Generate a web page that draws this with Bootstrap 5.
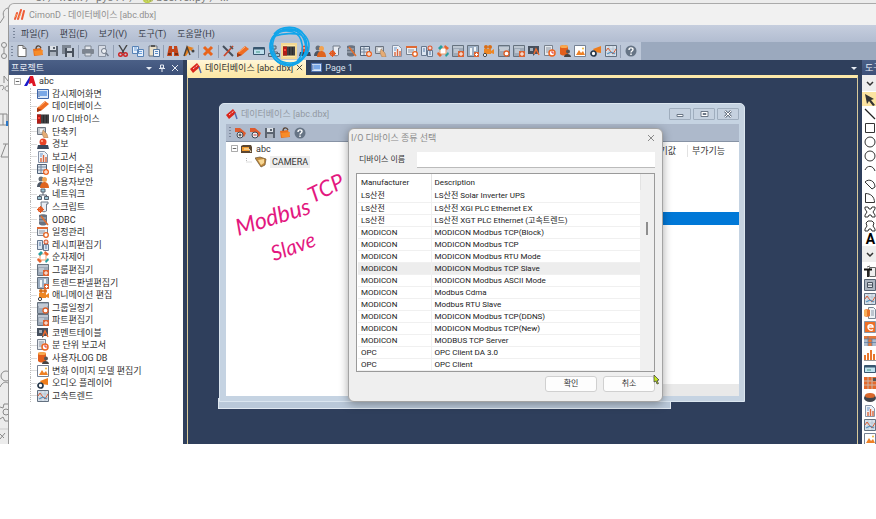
<!DOCTYPE html>
<html lang="ko">
<head>
<meta charset="utf-8">
<meta name="viewport" content="width=device-width, initial-scale=1">
<title>CimonD - 데이터베이스 [abc.dbx]</title>
<link href="https://cdn.jsdelivr.net/npm/bootstrap@5.3.0/dist/css/bootstrap.min.css" rel="stylesheet">
<style>
:root { --navy:#2f3f5c; --bar:#bcc7d8; --cream:#fde9a9; }
body { font-family:Roboto,"Noto Sans CJK KR",sans-serif; font-size:9px; line-height:12px; color:#333; background:#fff; }
button { font:inherit; color:inherit; border:0; background:none; padding:0; }
svg { display:block; }
.ic { width:12px; height:12px; flex:none; }
.desk { background:#ececec; }
.crumbs { height:3px; padding-left:35px; font-size:11px; line-height:10px; color:#777; }
.rail { width:8px; }
.app-win { background:#f1f1f1; border-top:1px solid #aaa; border-left:1px solid #999; border-top-left-radius:6px; min-width:0; }
.app-title { height:21px; padding-left:5px; gap:3px; color:#909090; }
.menus { height:17px; padding-left:4px; gap:11px; background:linear-gradient(#c6cede,#b2bdd1); }
.menus a { color:#3a3f4b; text-decoration:none; }
.menus .grip { margin-right:-5px; }
.grip { width:2px; height:11px; background:repeating-linear-gradient(#7b879b 0 1px,transparent 1px 3px); }
.tool-row { background:#9ba9be; }
.tools { width:632px; height:18px; padding:0 4px 0 2px; background:var(--bar); }
.tools .rule { width:1px; height:13px; background:#929eb2; }
.tools .on { background:#ffe9a8; outline:2px solid #f3d893; }
.work { background:var(--navy); }
.side { width:174px; background:#fff; }
.pane-head { height:15px; padding:0 4px 0 2px; background:linear-gradient(#4b6087,#3c5078); color:#e8edf5; }
.pane-head .ic { width:8px; height:8px; }
.pane-head .ic + .ic { margin-left:1px; }
.tree { height:327px; padding:0 0 0 5px; }
.tree li { gap:3px; white-space:nowrap; }
.tree .leaf { padding-left:23px; position:relative; }
.tree .leaf::before { content:""; position:absolute; left:16px; width:7px; top:0; height:100%; border-left:1px dotted #bbb; background:linear-gradient(#ddd,#ddd) 0 50%/7px 1px no-repeat; }
.side-foot { height:42px; }
.tabs { height:15px; }
.tabs .now { background:linear-gradient(#fff6d8,var(--cream)); color:#333; padding:0 3px; gap:3px; }
.tabs .other { color:#d9e0ec; padding:0 5px; gap:3px; }
.docs { margin:0 4px; min-width:0; }
.mdi { border:1px solid #d8c99a; border-top:3px solid var(--cream); border-bottom:0; position:relative; overflow:hidden; }
.doc-win { position:absolute; left:31px; top:25px; width:526px; height:299px; background:#c5d3e2; border:1px solid #dbe6f0; border-radius:5px 5px 0 0; padding:0 5px 5px 6px; }
.doc-back { position:absolute; left:30px; top:320px; width:453px; height:11px; background:#b9c8d9; border:1px solid #e0e8f1; }
.doc-title { height:20px; color:#9299a3; gap:3px; }
.caps { gap:2px; }
.caps button { width:22px; height:12px; border:1px solid #9fadbd; border-radius:1px; background:#c5d1df; }
.doc-tools { height:17px; background:#adb9cb; padding-left:3px; gap:3px; }
.doc-body { background:#fff; border-top:1px solid #8793a5; }
.db-tree { width:130px; padding:0 0 0 5px; }
.db-tree li { height:13px; gap:3px; }
.db-tree .kid { padding-left:15px; }
.db-tree .kid span { background:#eee; padding:0 2px; }
.vals { width:78px; background:#fff; white-space:nowrap; }
.vals .hd { height:18px; }
.vals .hd span { border-right:1px solid #e2e2e2; width:27px; padding-right:11px; }
.vals .pick { height:13px; margin-top:52px; background:#0078d7; }
.vals .foot { height:12px; background:#e9e9e9; }
.dlg { position:absolute; left:160px; top:50px; width:315px; background:#efefef; border:1px solid #a4a4a4; border-radius:6px; box-shadow:0 2px 10px rgba(0,0,0,.35); padding:0 7px 9px; }
.dlg-title { height:17px; margin:0 0 0 -5px; color:#8a8a8a; }
.dlg-field { height:27px; padding-left:3px; }
.dlg-field label { width:58px; font-size:8px; }
.dlg-field input { height:16px; border:0; border-bottom:1px solid #bbb; background:#fff; font-size:9px; min-width:0; }
.grid-box { border:1px solid #9a9a9a; background:#fff; }
.grid-box table { font-size:8px; line-height:11px; color:#222; margin:0 0 0 1px; table-layout:fixed; }
.grid-box th { font-weight:400; height:16px; padding:0 3px; border-right:1px solid #e3e3e3; }
.grid-box td { height:12px; padding:0 3px; border-bottom:1px solid #f0f0f0; border-right:1px solid #f0f0f0; white-space:nowrap; }
.grid-box .sel td { background:#ededed; }
.c1 { width:73px; }
.scroll { width:13px; background:#f0f0f0; padding:48px 0 0 5px; }
.scroll i { display:block; width:2px; height:13px; background:#8e8e8e; }
.dlg-btns { gap:6px; padding-top:4px; }
.dlg-btns button { width:52px; height:16px; background:#fdfdfd; border:1px solid #d0d0d0; border-radius:3px; font-size:8px; }
.mouse { position:absolute; right:1px; bottom:16px; width:8px; height:10px; }
.ink { position:absolute; color:#e3187f; font-family:Lato,"Noto Sans",sans-serif; font-style:italic; font-weight:400; line-height:24px; white-space:nowrap; }
.ink-a { left:46px; top:126px; font-size:23px; transform:rotate(-17deg); }
.ink-b { left:119px; top:98px; font-size:22px; transform:rotate(-26deg); }
.ink-c { left:82px; top:156px; font-size:21px; transform:rotate(-20deg); }
.loop { position:absolute; left:266px; top:26px; width:46px; height:42px; pointer-events:none; }
.box { width:14px; background:#fff; overflow:hidden; }
.box .pane-head { padding:0 0 0 3px; white-space:nowrap; }
.box button { display:block; width:14px; height:14px; padding:1px 0 0 2px; }
.box .fold { height:16px; margin-bottom:1px; background:#eee; padding-top:2px; }
.box .on { background:#fbe3a0; }
.box .letter { font-size:14px; line-height:14px; font-weight:700; color:#000; padding:0 0 0 3px; }
.picks { height:369px; overflow:hidden; }
</style>
<script src="https://cdn.jsdelivr.net/npm/bootstrap@5.3.0/dist/js/bootstrap.bundle.min.js"></script>
</head>
<body>
<svg width="0" height="0" class="position-absolute" aria-hidden="true">
<defs>
<symbol id="new" viewBox="0 0 12 12"><path d="M2 .5h5l3 3v8H2z" fill="#fff" stroke="#666"/><path d="M7 .5v3h3" fill="none" stroke="#666"/></symbol>
<symbol id="open" viewBox="0 0 12 12"><path d="M1 4l8-1 2 7-9 1z" fill="#e8701c"/><path d="M4 4c0-4 4-4 5-1" fill="none" stroke="#5a4637" stroke-width="1.3"/><path d="M2 6l9-1-1 5H3z" fill="#f78c28"/></symbol>
<symbol id="save" viewBox="0 0 12 12"><path d="M1 1h10v10H1z" fill="#5b6470"/><path d="M3 1h6v4H3z" fill="#dde2e8"/><path d="M3 7h6v4H3z" fill="#aab2bd"/><path d="M6 2h2v2H6z" fill="#5b6470"/></symbol>
<symbol id="saveall" viewBox="0 0 12 12"><path d="M0 0h9v9H0z" fill="#7c8591"/><path d="M3 3h9v9H3z" fill="#48515d"/><path d="M5 3h5v3H5zM5 8h5v4H5z" fill="#c9d0d9"/></symbol>
<symbol id="print" viewBox="0 0 12 12"><path d="M3 1h6v4H3z" fill="#e6e9ee" stroke="#7d8590"/><rect y="4" width="12" height="5" rx="1" fill="#7d8590"/><path d="M3 8h6v3H3z" fill="#dde1e7" stroke="#7d8590"/></symbol>
<symbol id="preview" viewBox="0 0 12 12"><path d="M1.500 .5h7v11h-7z" fill="#d7dce5" stroke="#8b94a3"/><circle cx="7" cy="6" r="2.500" fill="#eef1f5" stroke="#707a89"/><path d="M9 8l2.500 3" stroke="#707a89" stroke-width="1.500"/></symbol>
<symbol id="cut" viewBox="0 0 12 12"><path d="M2 0l5 8M10 0L5 8" stroke="#444" stroke-width="1.400"/><circle cx="3.500" cy="9.500" r="1.800" fill="none" stroke="#c22" stroke-width="1.400"/><circle cx="8.500" cy="9.500" r="1.800" fill="none" stroke="#c22" stroke-width="1.400"/></symbol>
<symbol id="copy" viewBox="0 0 12 12"><path d="M.5 1.500h6v7h-6zM5.500 4.500h6v7h-6z" fill="#e8f1fb" stroke="#5782b5"/><path d="M2 3h3M2 5h3M7 6.500h3M7 8.500h3" stroke="#6da0dc"/></symbol>
<symbol id="paste" viewBox="0 0 12 12"><path d="M1 1h8v10H1z" fill="#e9dfc7" stroke="#6b7280"/><path d="M3 0h4v2H3z" fill="#555"/><path d="M5.500 4.500h6v7h-6z" fill="#eef4fb" stroke="#53749b"/><path d="M7 6.500h3M7 8.500h3" stroke="#5b8cc6"/></symbol>
<symbol id="find" viewBox="0 0 12 12"><path d="M2 1h3v3h2V1h3l2 10H7V7H5v4H0z" fill="#c3451a"/><path d="M1 8h3v2H1zM8 8h3v2H8z" fill="#7b2c12"/></symbol>
<symbol id="replace" viewBox="0 0 12 12"><path d="M4 1l7 2-2 1 1 3-3-2-4 6H1z" fill="#e8821f"/><path d="M1 11L4 2l3 8" fill="none" stroke="#4b4036" stroke-width="1.400"/><circle cx="10" cy="6" r="1.500" fill="#444"/></symbol>
<symbol id="cross" viewBox="0 0 12 12"><path d="M2 2l8 8M10 2l-8 8" stroke="#e8641b" stroke-width="3"/></symbol>
<symbol id="wrench" viewBox="0 0 12 12"><path d="M1 1l10 10" stroke="#454e5b" stroke-width="2"/><path d="M11 1L2 11" stroke="#c9482c" stroke-width="1.800"/><path d="M8 1l3 3" stroke="#555" stroke-width="1.500"/></symbol>
<symbol id="pen" viewBox="0 0 12 12"><path d="M0 8l8-7 4 3-7 6-5 2z" fill="#ef6d22"/><path d="M0 8l5 2-5 2z" fill="#a23a16"/><path d="M2 7l6-5" stroke="#ffb27a"/></symbol>
<symbol id="tag" viewBox="0 0 12 12"><path d="M0 7l7-6 3 4-7 6z" fill="#d9261c"/><path d="M3 7l5-4" stroke="#fff" stroke-dasharray="1 1"/><path d="M9 5l2 6" stroke="#5570b0" stroke-width="1.500"/></symbol>
<symbol id="screen" viewBox="0 0 12 12"><path d="M.5 1.500h11v9H.5z" fill="#dce8f8" stroke="#3f66a8"/><path d="M3 3h7v5H3z" fill="#79a7e6"/><path d="M2 3v6" stroke="#3f66a8"/></symbol>
<symbol id="monitor" viewBox="0 0 12 12"><path d="M.5 2.500h11v7H.5z" fill="#bfe1ee" stroke="#38566f"/><path d="M1 3h10v1.500H1z" fill="#38566f"/><path d="M3 7h4" stroke="#498"/></symbol>
<symbol id="net" viewBox="0 0 12 12"><path d="M6 4v3M2.500 9V7h7v2" fill="none" stroke="#56606e"/><path d="M4 1h4v3H4zM.5 8.500h4v3h-4zM7.500 8.500h4v3h-4z" fill="#9dc5d4" stroke="#56606e"/></symbol>
<symbol id="io" viewBox="0 0 12 12"><path d="M0 1.500h12v9H0z" fill="#2c2c2e"/><path d="M0 1.500h4v9H0z" fill="#b11d16"/><path d="M1 4h2v2H1z" fill="#ff4537"/><path d="M5 2v8M8 2v8M11 2v8" stroke="#66696c" stroke-width=".7"/></symbol>
<symbol id="alarm" viewBox="0 0 12 12"><circle cx="6" cy="4" r="3.500" fill="#e94326"/><path d="M4 2h2v2H4z" fill="#ff9b7d"/><path d="M1 7h10l1 4H0z" fill="#39475c"/></symbol>
<symbol id="users" viewBox="0 0 12 12"><circle cx="4" cy="3" r="2.500" fill="#666e79"/><path d="M0 11c0-6 7-7 8 0z" fill="#4c5664"/><circle cx="7.500" cy="3.500" r="2.500" fill="#f3a24f"/><path d="M3 12c0-8 9-8 9 0z" fill="#df641f"/></symbol>
<symbol id="script" viewBox="0 0 12 12"><path d="M4 1h7v2H9.500v7c-1 1-4 1-5 0z" fill="#e8ecf2" stroke="#707a88"/><circle cx="3.500" cy="8.500" r="2" fill="none" stroke="#e65a1f" stroke-width="1.500"/><path d="M0 8.500h7M3.500 5v7" stroke="#e65a1f"/></symbol>
<symbol id="odbc" viewBox="0 0 12 12"><path d="M2 1c2-1 6-1 8 0v9c-2 2-6 2-8 0z" fill="#697381"/><path d="M2 4h7M2 7h7" stroke="#b1bac6"/><path d="M4 2l7 9" stroke="#e56e2d" stroke-width="1.500"/></symbol>
<symbol id="collect" viewBox="0 0 12 12"><path d="M.5 1.500h9v9h-9z" fill="#dde5ee" stroke="#526277"/><path d="M1 4h8M1 7h8M4 2v8" stroke="#75869c"/><circle cx="9" cy="9" r="3" fill="#ed6423"/><path d="M7 9h4M9 7v4" stroke="#fff"/></symbol>
<symbol id="key" viewBox="0 0 12 12"><path d="M.5 1.500h8v7h-8z" fill="#c4c9ce" stroke="#6c7480"/><path d="M3 3h3v3H3z" fill="#f1f3f5"/><path d="M6 4l1 1 3 3 1 4H7L5 8z" fill="#e5ac75" stroke="#9a744e" stroke-width=".5"/></symbol>
<symbol id="report" viewBox="0 0 12 12"><path d="M1.500 .5h6l3 3v8h-9z" fill="#edf2f8" stroke="#8793a7"/><path d="M4 11V7M6.500 11V4M9 11V6" stroke="#db653a" stroke-width="1.400"/><path d="M3 3h3M3 5h2" stroke="#6a94c8"/></symbol>
<symbol id="sched" viewBox="0 0 12 12"><path d="M.5 1.500h10v8H.5z" fill="#eceff3" stroke="#77818e"/><path d="M0 1h11v2H0z" fill="#df6a34"/><path d="M2 5h6M2 7h5" stroke="#8c96a4"/><circle cx="9" cy="9" r="2.300" fill="#fff" stroke="#e7621e" stroke-width="1.300"/></symbol>
<symbol id="recipe" viewBox="0 0 12 12"><path d="M.5 1.500h5v9h-5zM6.500 5.500h5v6h-5z" fill="#dbe5f1" stroke="#67788f"/><path d="M2 4h2M2 6h2M8 7h2M8 9h2" stroke="#557ba8"/><circle cx="9" cy="3" r="2.500" fill="#d8572f"/><path d="M7.500 3h3M9 1.500v3" stroke="#fff"/></symbol>
<symbol id="seq" viewBox="0 0 12 12"><path d="M3 3h6v6H3z" fill="#fff" stroke="#f09b64"/><path d="M1 3l3-3 2 2-3 3zM8 10l3-3 1 2-3 3z" fill="#27a0a0"/><path d="M8 0l4 3-2 2-3-3zM1 7l4 3-2 2-3-3z" fill="#e8642d"/></symbol>
<symbol id="group" viewBox="0 0 12 12"><path d="M.5 .5h11v11H.5z" fill="#9eaab8" stroke="#66727f"/><path d="M1 2h10M2 5h5M2 7h4" stroke="#dbe2ea"/><path d="M6 6h6v6H6z" fill="#dc6332"/><path d="M7 9h4M9 7v4" stroke="#fff"/></symbol>
<symbol id="trend" viewBox="0 0 12 12"><path d="M.5 .5h11v11H.5z" fill="#9eb0c4" stroke="#66727f"/><path d="M3 10V3h2v7zM7 6V2h2v4z" fill="#eff4f8"/><path d="M7 7h5v5H7z" fill="#dc6332"/><path d="M8 9.500h3M9.500 8v3" stroke="#fff"/></symbol>
<symbol id="anim" viewBox="0 0 12 12"><path d="M2 4h7v5H2zM9 6l3-2v5L9 8z" fill="#ee8724"/><circle cx="4" cy="2" r="2" fill="#d96e18"/><circle cx="8" cy="2" r="2" fill="#d96e18"/><circle cx="3" cy="10" r="1.600" fill="#fff" stroke="#444"/></symbol>
<symbol id="gsched" viewBox="0 0 12 12"><path d="M.5 .5h11v11H.5z" fill="#9eaab8" stroke="#66727f"/><path d="M1 3h10M2 5h8" stroke="#e5eaf0"/><circle cx="8.500" cy="8.500" r="2.500" fill="#fff" stroke="#de602a" stroke-width="1.300"/></symbol>
<symbol id="comment" viewBox="0 0 12 12"><path d="M0 1h11v8H7l-2 2V9H0z" fill="#46505e"/><path d="M6 9l2-5 3 6" fill="none" stroke="#ee6a2d" stroke-width="1.500"/><path d="M2 3h3v3H2z" fill="#a5afbb"/></symbol>
<symbol id="minute" viewBox="0 0 12 12"><path d="M.5 .5h8v10h-8z" fill="#e4e8ed" stroke="#79828f"/><path d="M2 3h5M2 5h4M2 7h3" stroke="#8d96a3"/><circle cx="8" cy="8" r="3" fill="#fff" stroke="#ec641f" stroke-width="1.500"/><path d="M8 6v2h2" stroke="#d33" fill="none"/></symbol>
<symbol id="logdb" viewBox="0 0 12 12"><path d="M1 1c2-1 6-1 8 0v8c-2 2-6 2-8 0z" fill="#e25f1c"/><ellipse cx="5" cy="1.500" rx="4" ry="1.500" fill="#f8a94f"/><circle cx="9" cy="6.500" r="2" fill="#555"/><path d="M5 12c0-4 7-4 7 0z" fill="#444"/></symbol>
<symbol id="docs" viewBox="0 0 12 12"><path d="M4.500 .5h5l2 2v9h-7z" fill="#eef2f6" stroke="#7b8796"/><path d="M7 4h3M7 6h3M7 8h3" stroke="#8d99a8"/><path d="M0 3c1-1 5-1 6 0v6c-1 1-5 1-6 0z" fill="#e8742a"/><path d="M0 3h3v6H0z" fill="#f7b05a"/></symbol>
<symbol id="image" viewBox="0 0 12 12"><path d="M.5 .5h11v11H.5z" fill="#fff" stroke="#758194"/><path d="M2 10l3-5 2 3 2-2 2 4z" fill="#ee8126"/><circle cx="9" cy="3.500" r="1" fill="#ecb53c"/></symbol>
<symbol id="audio" viewBox="0 0 12 12"><path d="M3 4l8-3v7L5 7z" fill="#ee7d1c"/><circle cx="3.500" cy="8.500" r="2.500" fill="#fff" stroke="#26384a" stroke-width="1.700"/></symbol>
<symbol id="fast" viewBox="0 0 12 12"><path d="M.5 .5h11v11H.5z" fill="#d8e1eb" stroke="#637080"/><path d="M1 4h10M1 8h10M4 1v10M8 1v10" stroke="#aab8c8" stroke-width=".6"/><path d="M1 6l2-3 3 4 2 2 3-5" fill="none" stroke="#dd6137"/><path d="M2 9l4-2 4 2" fill="none" stroke="#448bc0"/></symbol>
<symbol id="help" viewBox="0 0 12 12"><circle cx="6" cy="6" r="5.500" fill="#667485"/><path d="M4 5c0-3 4-2.500 4-.5C8 6 6 6 6 7.500M6 8.500V10" fill="none" stroke="#fff" stroke-width="1.400"/></symbol>
<symbol id="down" viewBox="0 0 8 8"><path d="M1 3h6L4 6z" fill="#e6ebf3"/></symbol>
<symbol id="pin" viewBox="0 0 8 8"><path d="M2.500 1h3v3h-3zM1 4.500h6M4 5v3" fill="none" stroke="#e6ebf3"/></symbol>
<symbol id="x" viewBox="0 0 8 8"><path d="M1 1l6 6M7 1L1 7" stroke="currentColor"/></symbol>
<symbol id="minus" viewBox="0 0 8 8"><path d="M.5 .5h7v7h-7z" fill="#fff" stroke="#999"/><path d="M2 4h4" stroke="#555"/></symbol>
<symbol id="logo" viewBox="0 0 12 12"><path d="M1 10l2-6M4 10l3-9M8 10l2-8" stroke="#ee5a36" stroke-width="2" stroke-linecap="round"/><path d="M1 8l2-3M5 9l2-5" stroke="#fba25c"/></symbol>
<symbol id="proj" viewBox="0 0 12 12"><path d="M0 11L6 1l1 3-4 7z" fill="#1a1acb"/><path d="M6 1h3l3 10H9L8 8 5 9z" fill="#de1525"/></symbol>
<symbol id="plusrec" viewBox="0 0 12 12"><path d="M1 1h5l6 5-2 4-5-5H1z" fill="#de5b2e"/><circle cx="6" cy="8" r="3" fill="#eee" stroke="#414a56"/><path d="M4.500 8h3M6 6.500v3" stroke="#333"/></symbol>
<symbol id="minusrec" viewBox="0 0 12 12"><path d="M1 1h5l6 5-2 4-5-5H1z" fill="#de5b2e"/><circle cx="6" cy="8" r="3" fill="#eee" stroke="#414a56"/><path d="M4.500 8h3" stroke="#c33"/></symbol>
<symbol id="db" viewBox="0 0 12 12"><path d="M0 3l2-1h8l1 2v6H0z" fill="#5c4630"/><path d="M1 4h7v4H1z" fill="#f09a2d"/><path d="M3 6h5l2 3" stroke="#fff1d0" fill="none"/></symbol>
<symbol id="cam" viewBox="0 0 12 12"><path d="M0 2l5-1 6 2-1 6-4 2z" fill="#c08a3d" stroke="#6a5130" stroke-width=".7"/><path d="M3 4l6-1v4L6 9z" fill="#f6d795"/></symbol>
<symbol id="chev" viewBox="0 0 12 12"><path d="M3 4l3 3 3-3" fill="none" stroke="#333" stroke-width="1.500"/></symbol>
<symbol id="arrow" viewBox="0 0 12 12"><path d="M1 0l9 5-3 1 4 5-2 1-4-5-2 3z" fill="#333"/></symbol>
<symbol id="line" viewBox="0 0 12 12"><path d="M1 1l10 10" stroke="#222" stroke-width="1.300"/></symbol>
<symbol id="rect" viewBox="0 0 12 12"><path d="M1.500 1.500h9v9h-9z" fill="#fff" stroke="#333"/></symbol>
<symbol id="circ" viewBox="0 0 12 12"><circle cx="6" cy="6" r="5" fill="#fff" stroke="#333"/></symbol>
<symbol id="arc" viewBox="0 0 12 12"><path d="M1 6c2-5 8-5 10 1" fill="none" stroke="#333"/></symbol>
<symbol id="chord" viewBox="0 0 12 12"><path d="M1 4c4-4 10-1 10 5l-3 2z" fill="none" stroke="#333"/></symbol>
<symbol id="pie" viewBox="0 0 12 12"><path d="M1.500 1.500c5 0 9 3 9 9h-9z" fill="none" stroke="#333"/></symbol>
<symbol id="poly" viewBox="0 0 12 12"><path d="M1 1h3l1 2h2l1-2h3v2L9 6l2 3v2H8L7 9H5l-1 2H1V9l2-3-2-3z" fill="none" stroke="#333"/></symbol>
<symbol id="poly2" viewBox="0 0 12 12"><path d="M4 1h4l2 2-1 3 2 3v2H8L7 9H5l-1 2H1V9l2-3-1-3z" fill="none" stroke="#333"/></symbol>
<symbol id="stamp" viewBox="0 0 12 12"><path d="M5.500 2.500h6v9h-6z" fill="#eee" stroke="#666"/><path d="M0 4.500h8M4 4v8" stroke="#111" stroke-width="1.800"/><path d="M3 2l3-1" stroke="#666"/></symbol>
<symbol id="btn3" viewBox="0 0 12 12"><path d="M.5 .5h11v11H.5z" fill="#adb6c1" stroke="#596575"/><path d="M3.500 3.500h5v5h-5zM3 6h6" fill="#e4e8ed" stroke="#49525f"/></symbol>
<symbol id="ebox" viewBox="0 0 12 12"><path d="M.5 .5h11v11H.5z" fill="#ee6f25" stroke="#8a96a6"/><path d="M9 8.500c-2 1.500-5 .5-5-2.500s5-3 5 0H4" fill="none" stroke="#fff" stroke-width="1.500"/></symbol>
<symbol id="sheet" viewBox="0 0 12 12"><path d="M0 1h12v10H0z" fill="#aebccd"/><path d="M0 1h12v3H0zM4 4h4v7H4z" fill="#e3793b"/><path d="M0 4h12M4 1v10M8 4v7M0 7.500h12" stroke="#5a789e" stroke-width=".7"/></symbol>
<symbol id="cells" viewBox="0 0 12 12"><path d="M0 0h12v12H0z" fill="#e3692b"/><path d="M0 4h12M4 0v12M8 0v12M0 8h12" stroke="#c9b5a8"/><path d="M9 1h3v3H9z" fill="#555"/></symbol>
<symbol id="bars" viewBox="0 0 12 12"><path d="M1 11V6M4 11V4M7 11V1M10 11V5" stroke="#e8762c" stroke-width="2"/><path d="M0 11.500h12" stroke="#999"/></symbol>
<symbol id="disk" viewBox="0 0 12 12"><ellipse cx="6" cy="7" rx="6" ry="4" fill="#40464f"/><ellipse cx="6" cy="4.500" rx="5" ry="2.500" fill="#d9672b"/></symbol>
</defs>
</svg>

<div class="desk position-relative overflow-hidden">
  <div class="crumbs d-flex align-items-end overflow-hidden" aria-label="경로"><span>C: 〉work 〉py311 〉🐍 bserver.py 〉...</span></div>
  <div class="d-flex">
    <div class="rail" aria-hidden="true">
      <svg width="8" height="440" viewBox="0 3 8 440" fill="none" stroke="#8a8a8a">
        <path d="M0 23l4-6c-2-4 0-8 4-9"/><circle cx="4" cy="45" r="2.500"/><circle cx="4" cy="56" r="2.500"/><path d="M4 48v5"/>
        <path d="M4 83v-7l4 5M0 86c4-2 5 2 2 4M8 86c-4 0-4 5 0 5"/><path d="M0 114h7v11H0M3 114v11"/><path d="M7 121v5" stroke="#2c78c8" stroke-width="2"/>
        <path d="M3 144h5M6 144l-5 13h7"/><circle cx="6" cy="376" r="5"/><path d="M0 387c3-6 6-5 8-4"/><path d="M0 407l3 1 1-4h4M0 419l3-2 2 4h3"/><circle cx="6" cy="412" r="3"/><path d="M0 429h8" stroke="#ccc"/><path d="M0 439l5-6M0 434l4 4"/>
      </svg>
    </div>
    <main class="app-win flex-grow-1">
      <header class="app-title d-flex align-items-center"><svg class="ic"><use href="#logo"/></svg><span>CimonD - 데이터베이스 [abc.dbx]</span></header>
      <nav class="menus d-flex align-items-center"><span class="grip"></span><a href="#">파일(F)</a><a href="#">편집(E)</a><a href="#">보기(V)</a><a href="#">도구(T)</a><a href="#">도움말(H)</a></nav>
      <div class="tool-row">
        <div class="tools d-flex align-items-center justify-content-between" role="toolbar" aria-label="도구 모음">
          <span class="grip"></span>
          <button aria-label="새로 만들기"><svg class="ic"><use href="#new"/></svg></button>
          <button aria-label="열기"><svg class="ic"><use href="#open"/></svg></button>
          <button aria-label="저장"><svg class="ic"><use href="#save"/></svg></button>
          <button aria-label="모두 저장"><svg class="ic"><use href="#saveall"/></svg></button>
          <span class="rule"></span>
          <button aria-label="인쇄"><svg class="ic"><use href="#print"/></svg></button>
          <button aria-label="미리 보기"><svg class="ic"><use href="#preview"/></svg></button>
          <span class="rule"></span>
          <button aria-label="잘라내기"><svg class="ic"><use href="#cut"/></svg></button>
          <button aria-label="복사"><svg class="ic"><use href="#copy"/></svg></button>
          <button aria-label="붙여넣기"><svg class="ic"><use href="#paste"/></svg></button>
          <span class="rule"></span>
          <button aria-label="찾기"><svg class="ic"><use href="#find"/></svg></button>
          <button aria-label="바꾸기"><svg class="ic"><use href="#replace"/></svg></button>
          <span class="rule"></span>
          <button aria-label="삭제"><svg class="ic"><use href="#cross"/></svg></button>
          <span class="rule"></span>
          <button aria-label="설정"><svg class="ic"><use href="#wrench"/></svg></button>
          <button aria-label="데이터베이스"><svg class="ic"><use href="#pen"/></svg></button>
          <button aria-label="화면"><svg class="ic"><use href="#monitor"/></svg></button>
          <button aria-label="네트워크"><svg class="ic"><use href="#net"/></svg></button>
          <button class="on" aria-label="I/O 디바이스"><svg class="ic"><use href="#io"/></svg></button>
          <button aria-label="경보"><svg class="ic"><use href="#alarm"/></svg></button>
          <button aria-label="사용자보안"><svg class="ic"><use href="#users"/></svg></button>
          <button aria-label="스크립트"><svg class="ic"><use href="#script"/></svg></button>
          <button aria-label="ODBC"><svg class="ic"><use href="#odbc"/></svg></button>
          <button aria-label="데이터수집"><svg class="ic"><use href="#collect"/></svg></button>
          <button aria-label="단축키"><svg class="ic"><use href="#key"/></svg></button>
          <button aria-label="보고서"><svg class="ic"><use href="#report"/></svg></button>
          <button aria-label="일정관리"><svg class="ic"><use href="#sched"/></svg></button>
          <button aria-label="레시피편집기"><svg class="ic"><use href="#recipe"/></svg></button>
          <button aria-label="순차제어"><svg class="ic"><use href="#seq"/></svg></button>
          <button aria-label="그룹편집기"><svg class="ic"><use href="#group"/></svg></button>
          <button aria-label="트렌드판넬편집기"><svg class="ic"><use href="#trend"/></svg></button>
          <button aria-label="애니메이션 편집"><svg class="ic"><use href="#anim"/></svg></button>
          <button aria-label="그룹일정기"><svg class="ic"><use href="#gsched"/></svg></button>
          <button aria-label="파트편집기"><svg class="ic"><use href="#group"/></svg></button>
          <button aria-label="코멘트테이블"><svg class="ic"><use href="#comment"/></svg></button>
          <button aria-label="분 단위 보고서"><svg class="ic"><use href="#minute"/></svg></button>
          <button aria-label="사용자LOG DB"><svg class="ic"><use href="#logdb"/></svg></button>
          <button aria-label="변화 이미지 모델 편집기"><svg class="ic"><use href="#image"/></svg></button>
          <button aria-label="오디오 플레이어"><svg class="ic"><use href="#audio"/></svg></button>
          <button aria-label="고속트렌드"><svg class="ic"><use href="#fast"/></svg></button>
          <span class="rule"></span>
          <button aria-label="도움말"><svg class="ic"><use href="#help"/></svg></button>
        </div>
      </div>

      <div class="work d-flex">
        <aside class="side flex-shrink-0">
          <div class="pane-head d-flex align-items-center gap-1"><span class="flex-grow-1">프로젝트</span><svg class="ic"><use href="#down"/></svg><svg class="ic"><use href="#pin"/></svg><svg class="ic"><use href="#x"/></svg></div>
          <ul class="tree list-unstyled d-flex flex-column mb-0">
            <li class="d-flex align-items-center flex-fill"><svg width="7" height="7"><use href="#minus"/></svg><svg class="ic"><use href="#proj"/></svg><span>abc</span></li>
            <li class="leaf d-flex align-items-center flex-fill"><svg class="ic"><use href="#screen"/></svg><span>감시제어화면</span></li>
            <li class="leaf d-flex align-items-center flex-fill"><svg class="ic"><use href="#pen"/></svg><span>데이터베이스</span></li>
            <li class="leaf d-flex align-items-center flex-fill"><svg class="ic"><use href="#io"/></svg><span>I/O 디바이스</span></li>
            <li class="leaf d-flex align-items-center flex-fill"><svg class="ic"><use href="#key"/></svg><span>단축키</span></li>
            <li class="leaf d-flex align-items-center flex-fill"><svg class="ic"><use href="#alarm"/></svg><span>경보</span></li>
            <li class="leaf d-flex align-items-center flex-fill"><svg class="ic"><use href="#report"/></svg><span>보고서</span></li>
            <li class="leaf d-flex align-items-center flex-fill"><svg class="ic"><use href="#collect"/></svg><span>데이터수집</span></li>
            <li class="leaf d-flex align-items-center flex-fill"><svg class="ic"><use href="#users"/></svg><span>사용자보안</span></li>
            <li class="leaf d-flex align-items-center flex-fill"><svg class="ic"><use href="#net"/></svg><span>네트워크</span></li>
            <li class="leaf d-flex align-items-center flex-fill"><svg class="ic"><use href="#script"/></svg><span>스크립트</span></li>
            <li class="leaf d-flex align-items-center flex-fill"><svg class="ic"><use href="#odbc"/></svg><span>ODBC</span></li>
            <li class="leaf d-flex align-items-center flex-fill"><svg class="ic"><use href="#sched"/></svg><span>일정관리</span></li>
            <li class="leaf d-flex align-items-center flex-fill"><svg class="ic"><use href="#recipe"/></svg><span>레시피편집기</span></li>
            <li class="leaf d-flex align-items-center flex-fill"><svg class="ic"><use href="#seq"/></svg><span>순차제어</span></li>
            <li class="leaf d-flex align-items-center flex-fill"><svg class="ic"><use href="#group"/></svg><span>그룹편집기</span></li>
            <li class="leaf d-flex align-items-center flex-fill"><svg class="ic"><use href="#trend"/></svg><span>트렌드판넬편집기</span></li>
            <li class="leaf d-flex align-items-center flex-fill"><svg class="ic"><use href="#anim"/></svg><span>애니메이션 편집</span></li>
            <li class="leaf d-flex align-items-center flex-fill"><svg class="ic"><use href="#gsched"/></svg><span>그룹일정기</span></li>
            <li class="leaf d-flex align-items-center flex-fill"><svg class="ic"><use href="#group"/></svg><span>파트편집기</span></li>
            <li class="leaf d-flex align-items-center flex-fill"><svg class="ic"><use href="#comment"/></svg><span>코멘트테이블</span></li>
            <li class="leaf d-flex align-items-center flex-fill"><svg class="ic"><use href="#minute"/></svg><span>분 단위 보고서</span></li>
            <li class="leaf d-flex align-items-center flex-fill"><svg class="ic"><use href="#logdb"/></svg><span>사용자LOG DB</span></li>
            <li class="leaf d-flex align-items-center flex-fill"><svg class="ic"><use href="#image"/></svg><span>변화 이미지 모델 편집기</span></li>
            <li class="leaf d-flex align-items-center flex-fill"><svg class="ic"><use href="#audio"/></svg><span>오디오 플레이어</span></li>
            <li class="leaf d-flex align-items-center flex-fill"><svg class="ic"><use href="#fast"/></svg><span>고속트렌드</span></li>
          </ul>
          <div class="side-foot"></div>
        </aside>

        <section class="docs flex-grow-1 d-flex flex-column">
          <div class="tabs d-flex align-items-stretch">
            <button class="now d-flex align-items-center"><svg class="ic"><use href="#tag"/></svg><span>데이터베이스 [abc.dbx]</span><svg width="7" height="7"><use href="#x"/></svg></button>
            <button class="other d-flex align-items-center"><svg width="11" height="11"><use href="#screen"/></svg><span>Page 1</span></button>
            <svg class="ms-auto align-self-center" width="8" height="8"><use href="#down"/></svg>
          </div>
          <div class="mdi flex-grow-1">
            <div class="doc-back"></div>
            <section class="doc-win d-flex flex-column">
              <div class="doc-title d-flex align-items-center"><svg class="ic"><use href="#tag"/></svg><span class="flex-grow-1">데이터베이스 [abc.dbx]</span>
                <div class="caps d-flex">
                  <button aria-label="최소화"><svg width="20" height="10"><path d="M7 5.500h6v2H7z" fill="#fff" stroke="#6b7786"/></svg></button>
                  <button aria-label="최대화"><svg width="20" height="10"><path d="M7 2.500h7v5H7zM9 4.500h3v1H9z" fill="#fff" stroke="#6b7786"/></svg></button>
                  <button aria-label="닫기"><svg width="20" height="10"><path d="M7 2l6 6M13 2L7 8" stroke="#6b7786" stroke-width="2.500"/><path d="M7 2l6 6M13 2L7 8" stroke="#fff"/></svg></button>
                </div>
              </div>
              <div class="doc-tools d-flex align-items-center"><span class="grip"></span>
                <button aria-label="추가"><svg class="ic"><use href="#plusrec"/></svg></button><button aria-label="제거"><svg class="ic"><use href="#minusrec"/></svg></button><button aria-label="저장"><svg class="ic"><use href="#save"/></svg></button><button aria-label="열기"><svg class="ic"><use href="#open"/></svg></button><button aria-label="도움말"><svg class="ic"><use href="#help"/></svg></button>
              </div>
              <div class="doc-body d-flex flex-grow-1 justify-content-between">
                <ul class="db-tree list-unstyled mb-0">
                  <li class="d-flex align-items-center"><svg width="7" height="7"><use href="#minus"/></svg><svg class="ic"><use href="#db"/></svg><span>abc</span></li>
                  <li class="kid d-flex align-items-center"><svg width="6" height="8"><path d="M.5 0v4H6" fill="none" stroke="#bbb" stroke-dasharray="1 1"/></svg><svg class="ic"><use href="#cam"/></svg><span>CAMERA</span></li>
                </ul>
                <div class="vals d-flex flex-column">
                  <div class="hd d-flex align-items-center gap-1"><span class="overflow-hidden d-flex justify-content-end">기값</span><div>부가기능</div></div>
                  <div class="pick"></div>
                  <div class="foot mt-auto"></div>
                </div>
              </div>
            </section>

            <section class="dlg" role="dialog" aria-label="I/O 디바이스 종류 선택">
              <div class="dlg-title d-flex align-items-center justify-content-between"><span>I/O 디바이스 종류 선택</span><button aria-label="닫기"><svg width="8" height="8"><use href="#x"/></svg></button></div>
              <div class="dlg-field d-flex align-items-center"><label for="dev">디바이스 이름</label><input id="dev" type="text" class="flex-grow-1"></div>
              <div class="grid-box d-flex">
                <table class="flex-grow-1">
                  <thead><tr><th class="c1">Manufacturer</th><th>Description</th></tr></thead>
                  <tbody>
                    <tr><td>LS산전</td><td>LS산전 Solar Inverter UPS</td></tr>
                    <tr><td>LS산전</td><td>LS산전 XGI PLC Ethernet EX</td></tr>
                    <tr><td>LS산전</td><td>LS산전 XGT PLC Ethernet (고속트렌드)</td></tr>
                    <tr><td>MODICON</td><td>MODICON Modbus TCP(Block)</td></tr>
                    <tr><td>MODICON</td><td>MODICON Modbus TCP</td></tr>
                    <tr><td>MODICON</td><td>MODICON Modbus RTU Mode</td></tr>
                    <tr class="sel"><td>MODICON</td><td>MODICON Modbus TCP Slave</td></tr>
                    <tr><td>MODICON</td><td>MODICON Modbus ASCII Mode</td></tr>
                    <tr><td>MODICON</td><td>Modbus Cdma</td></tr>
                    <tr><td>MODICON</td><td>Modbus RTU Slave</td></tr>
                    <tr><td>MODICON</td><td>MODICON Modbus TCP(DDNS)</td></tr>
                    <tr><td>MODICON</td><td>MODICON Modbus TCP(New)</td></tr>
                    <tr><td>MODICON</td><td>MODBUS TCP Server</td></tr>
                    <tr><td>OPC</td><td>OPC Client DA 3.0</td></tr>
                    <tr><td>OPC</td><td>OPC Client</td></tr>
                  </tbody>
                </table>
                <div class="scroll"><i></i></div>
              </div>
              <div class="dlg-btns d-flex justify-content-end"><button>확인</button><button>취소</button></div>
              <svg class="mouse" viewBox="0 0 8 10"><path d="M1 0l5 5-2 .5 1.500 3-1.500.5L3 6 1 7z" fill="#c5ea1f" stroke="#333" stroke-width=".7"/></svg>
            </section>
            <div class="ink ink-a">Modbus</div>
            <div class="ink ink-b">TCP</div>
            <div class="ink ink-c">Slave</div>
          </div>
        </section>

        <aside class="box flex-shrink-0">
          <div class="pane-head d-flex align-items-center">도구</div>
          <div class="picks">
            <button class="fold" aria-label="도형"><svg class="ic"><use href="#chev"/></svg></button>
            <button class="on" aria-label="선택"><svg class="ic"><use href="#arrow"/></svg></button>
            <button aria-label="선"><svg class="ic"><use href="#line"/></svg></button>
            <button aria-label="사각형"><svg class="ic"><use href="#rect"/></svg></button>
            <button aria-label="타원"><svg class="ic"><use href="#circ"/></svg></button>
            <button aria-label="원"><svg class="ic"><use href="#circ"/></svg></button>
            <button aria-label="호"><svg class="ic"><use href="#arc"/></svg></button>
            <button aria-label="현"><svg class="ic"><use href="#chord"/></svg></button>
            <button aria-label="부채꼴"><svg class="ic"><use href="#pie"/></svg></button>
            <button aria-label="다각선"><svg class="ic"><use href="#poly"/></svg></button>
            <button aria-label="다각형"><svg class="ic"><use href="#poly2"/></svg></button>
            <button class="letter" aria-label="문자">A</button>
            <button class="fold" aria-label="개체"><svg class="ic"><use href="#chev"/></svg></button>
            <button aria-label="태그"><svg class="ic"><use href="#stamp"/></svg></button>
            <button aria-label="버튼"><svg class="ic"><use href="#btn3"/></svg></button>
            <button aria-label="트렌드"><svg class="ic"><use href="#fast"/></svg></button>
            <button aria-label="문서"><svg class="ic"><use href="#docs"/></svg></button>
            <button aria-label="웹"><svg class="ic"><use href="#ebox"/></svg></button>
            <button aria-label="표"><svg class="ic"><use href="#sheet"/></svg></button>
            <button aria-label="막대"><svg class="ic"><use href="#bars"/></svg></button>
            <button aria-label="창"><svg class="ic"><use href="#monitor"/></svg></button>
            <button aria-label="격자"><svg class="ic"><use href="#cells"/></svg></button>
            <button aria-label="디스크"><svg class="ic"><use href="#disk"/></svg></button>
            <button aria-label="목록"><svg class="ic"><use href="#report"/></svg></button>
            <button aria-label="그래프"><svg class="ic"><use href="#fast"/></svg></button>
            <button aria-label="그림"><svg class="ic"><use href="#image"/></svg></button>
          </div>
        </aside>
      </div>
    </main>
  </div>
  <svg class="loop" viewBox="0 0 46 42" fill="none" stroke="#12a5ea" stroke-width="1.600" aria-hidden="true">
    <ellipse cx="22" cy="21" rx="18" ry="18"/><ellipse cx="24" cy="20" rx="19" ry="17"/><path d="M8 8C15-1 33-1 38 9s4 22-6 28-24 1-27-12S10 4 23 4s16 9 17 18-10 17-19 16S5 26 7 16 17 3 27 6s13 21 4 29"/><path d="M9 10c8-3 20-3 27-1"/>
  </svg>
</div>
</body>
</html>
